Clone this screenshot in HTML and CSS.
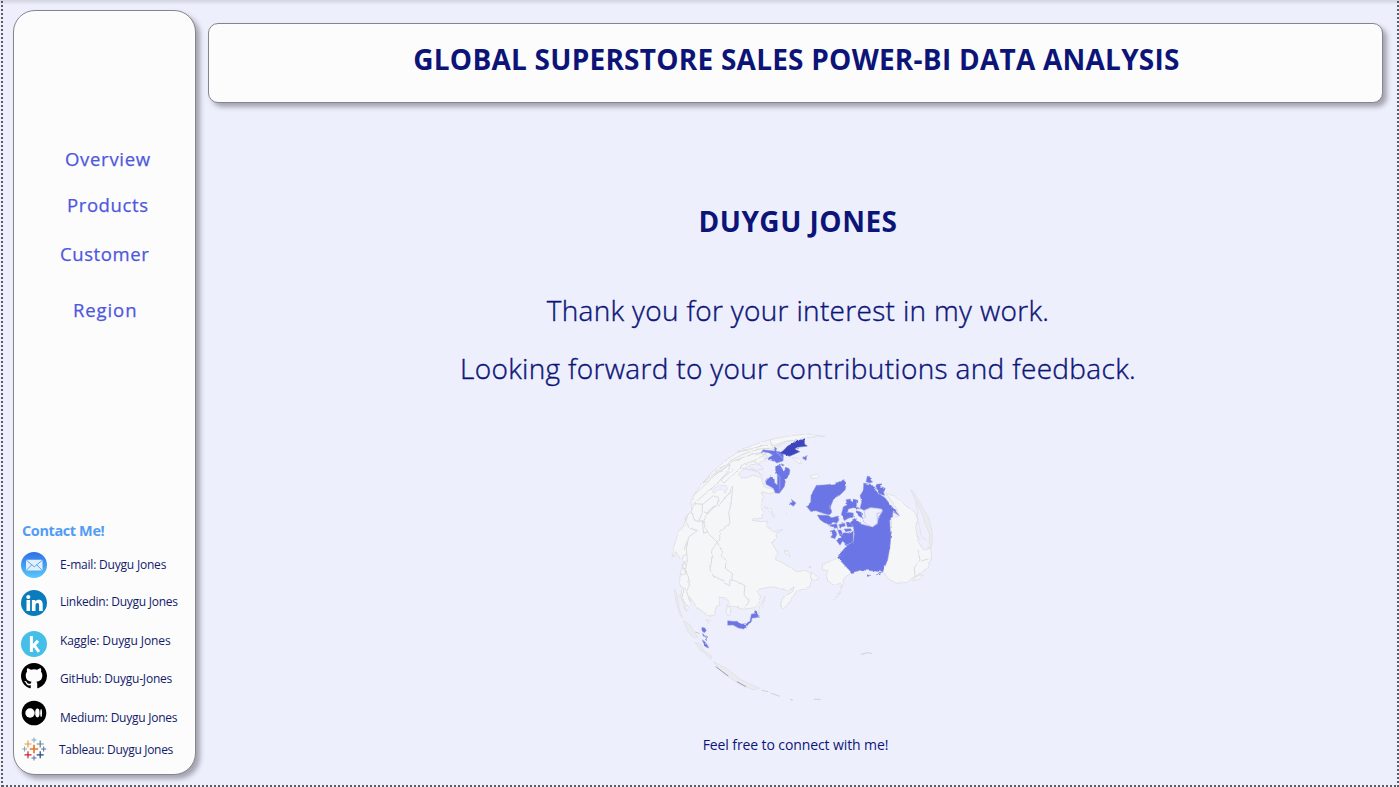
FILE: index.html
```html
<!DOCTYPE html>
<html lang="en">
<head>
<meta charset="utf-8">
<title>Global Superstore Sales</title>
<link rel="stylesheet" href="styles.css">
</head>
<body>
<div class="page">
  <aside class="sidebar">
    <nav class="nav">
      <a class="nav-link overview">Overview</a>
      <a class="nav-link products">Products</a>
      <a class="nav-link customer">Customer</a>
      <a class="nav-link region">Region</a>
    </nav>
    <h3 class="contact-title"><span>Contact Me!</span></h3>
    <div class="contact email">
      <svg class="icon" viewBox="0 0 26 26"><defs><linearGradient id="mail" x1="0" y1="0" x2="0" y2="1"><stop offset="0" stop-color="#2e6fe8"/><stop offset="1" stop-color="#5ac8fa"/></linearGradient></defs><circle cx="13" cy="13" r="13" fill="url(#mail)"/><rect x="5" y="7.8" width="16.5" height="10.8" rx="1.3" fill="#e2effd"/><path d="M5.3 8.2l8 6.6 8-6.6M5.5 18.2l5.2-5.4M21 18.2l-5.2-5.4" fill="none" stroke="#4b9cf0" stroke-width=".9"/></svg>
      <span class="label">E-mail: Duygu Jones</span>
    </div>
    <div class="contact linkedin">
      <svg class="icon" viewBox="0 0 26 26"><circle cx="13" cy="13" r="13" fill="#0a7cbc"/><circle cx="7.3" cy="7" r="2.1" fill="#fff"/><path d="M5.500 10.100h3.600v10.800H5.500zM10.900 10.100h3.400v1.400c.8-1.100 1.900-1.700 3.200-1.700 3.100 0 4.200 1.900 4.200 4.800v6.300h-3.600v-5.500c0-1.500-.4-2.400-1.600-2.400-1.500 0-2 1.100-2 2.500v5.400h-3.600z" fill="#fff"/></svg>
      <span class="label">Linkedin: Duygu Jones</span>
    </div>
    <div class="contact kaggle">
      <svg class="icon" viewBox="0 0 26 26"><circle cx="13" cy="13" r="13" fill="#45bfe8"/><path d="M10.400 5v16M17 9.900l-5.700 6M13 14.200l5 6.700" fill="none" stroke="#fff" stroke-width="3"/></svg>
      <span class="label">Kaggle: Duygu Jones</span>
    </div>
    <div class="contact github">
      <svg class="icon" viewBox="0 0 16 16"><path d="M8 0C3.580 0 0 3.580 0 8c0 3.540 2.290 6.530 5.470 7.590.4.070.55-.17.55-.38 0-.19-.01-.82-.01-1.490-2.010.37-2.530-.49-2.690-.94-.09-.23-.48-.94-.82-1.130-.28-.15-.68-.52-.01-.53.63-.01 1.080.58 1.230.82.72 1.210 1.870.87 2.330.66.07-.52.28-.87.51-1.070-1.780-.2-3.640-.89-3.640-3.950 0-.87.31-1.590.82-2.150-.08-.2-.36-1.020.08-2.120 0 0 .67-.21 2.200.82a7.600 7.600 0 0 1 4 0c1.530-1.040 2.200-.82 2.200-.82.44 1.100.16 1.920.08 2.120.51.56.82 1.270.82 2.150 0 3.070-1.870 3.750-3.650 3.950.29.25.54.73.54 1.480 0 1.070-.01 1.930-.01 2.200 0 .21.15.46.55.38A8.010 8.010 0 0 0 16 8c0-4.420-3.580-8-8-8z"/></svg>
      <span class="label">GitHub: Duygu-Jones</span>
    </div>
    <div class="contact medium">
      <svg class="icon" viewBox="0 0 26 26"><circle cx="13" cy="13" r="12.300"/><g fill="#fff"><circle cx="9" cy="13" r="4.700"/><ellipse cx="16.400" cy="13" rx="2.200" ry="4.400"/><ellipse cx="20.100" cy="13" rx=".9" ry="4"/></g></svg>
      <span class="label">Medium: Duygu Jones</span>
    </div>
    <div class="contact tableau">
      <svg class="icon" viewBox="0 0 26 26" fill="none" stroke-width="1.200"><path d="M13 8.800v8.400M8.800 13h8.400" stroke="#e8762c" stroke-width="1.700"/><path d="M7 4.500v7M3.500 8h7" stroke="#eb9a45"/><path d="M19.200 4.500v7M15.700 8h7" stroke="#5b8590"/><path d="M7 15.300v7M3.500 18.800h7" stroke="#c72035"/><path d="M19.200 15.300v7M15.700 18.800h7" stroke="#1f457e"/><path d="M13 1.500v5M10.500 4h5M3.600 10.500v5M1.100 13h5" stroke="#7ea7b2" stroke-width="1"/><path d="M13 19.500v5M10.500 22h5M22.700 10.500v5M20.200 13h5" stroke="#6469a0" stroke-width="1"/></svg>
      <span class="label">Tableau: Duygu Jones</span>
    </div>
  </aside>
  <main class="main">
    <header class="banner"><h1 class="title"><span>GLOBAL SUPERSTORE SALES POWER-BI DATA ANALYSIS</span></h1></header>
    <h2 class="name"><span>DUYGU JONES</span></h2>
    <p class="message thanks"><span>Thank you for your interest in my work.</span></p>
    <p class="message looking"><span>Looking forward to your contributions and feedback.</span></p>
    <svg class="globe" viewBox="0 0 840 840" stroke-linejoin="round">
      <defs><filter id="coast" filterUnits="userSpaceOnUse" x="0" y="0" width="840" height="840" color-interpolation-filters="sRGB"><feTurbulence type="fractalNoise" baseFrequency=".06" numOctaves="2" seed="4"/><feDisplacementMap in="SourceGraphic" scale="8" xChannelSelector="R" yChannelSelector="G"/></filter></defs>
      <g filter="url(#coast)">
      <!-- land -->
      <g fill="#f4f6f8" stroke="#dfe1e4" stroke-width="3">
        <path d="M495 34L440 27L385 33L330 44L280 60L235 80L195 108L160 138L130 170L106 202L92 230L96 255L80 275L72 300L52 330L40 370L36 400L48 380L62 402L75 412L62 440L58 475L66 490L62 515L80 560L92 535L90 515L108 545L130 562L150 574L164 570L168 545L180 540L175 517L195 518L210 532L200 542L212 550L210 571L198 565L202 542L225 545L250 553L285 548L298 530L302 512L292 500L298 492L340 485L362 492L385 498L402 485L398 500L370 515L360 543L370 553L390 530L410 498L448 487L455 465L452 446L437 436L410 440L392 428L365 412L346 403L354 385L334 352L350 342L348 325L369 314L340 320L320 300L322 288L304 290L276 286L280 280L306 280L309 262L302 242L310 214L304 200L328 206L348 202L340 192L318 188L306 170L306 158L278 150L262 158L240 158L236 148L250 132L272 120L295 116L318 106L310 90L335 70L385 50L430 38L495 34Z"/>
        <path d="M533 398L508 410L488 417L486 434L505 438L499 448L503 470L520 480L545 475L543 495L521 524L536 512L548 482L552 460L575 442Z"/>
        <path d="M678 205L700 212L735 240L765 262L774 283L767 305L775 350L790 375L812 365L815 400L802 430L775 450L760 456L742 472L710 475L685 462L668 437L685 390L693 320L692 280L718 273L705 242Z"/>
        <path d="M454 442l22 15-10 10-14-7zM452 151l18-4 10 7-6 7-22-2zM372 376l12 4 7 12-14-4zM314 243l20 10 10 24-5-2-8-17-17-9zM298 548l10-20 7-15-8 35-12 20zM138 587l14 0-7 8zM397 98l18 2 10 17-12-3zM760 461l18-10 14-1-10 11-24 7z"/>
      </g>
      <!-- country borders -->
      <path d="M100 212L128 186L165 150L210 118L205 138L170 177L120 220L97 240M120 180L160 148L195 130M165 140L220 108L275 88L320 80L310 92L280 108L250 118L225 145L192 174L182 165L220 133M204 112L240 91L295 72L330 70M330 45L335 64L380 48L420 46M230 82L260 76L325 57M95 252L108 236L128 238L126 265L115 290L101 282L95 252M126 240L160 212L176 220L172 235L145 265L132 260M115 290L127 287L136 302L144 325L131 325L127 286M85 265L77 290L90 310L112 317M130 290L148 255L180 237L203 210L218 183L213 240L206 260L210 295L194 307L178 320L180 342L172 352L160 340L144 325M172 352L155 375L155 405L150 435L162 453L190 468L208 483L211 463L238 472L255 482L252 510L268 528L254 548M172 352L188 382L186 395L198 405L196 430L218 446L215 466M112 317L86 336L79 370L82 406L76 435L85 455L88 480L80 500L92 535M76 408L65 420L78 445L62 450M64 485L73 491L65 520L80 542L73 555M774 375L780 405L763 427L765 455M784 408L808 401M280 108L298 118L310 132L290 136L270 128M248 130L285 138L308 152M295 85L318 89L324 101L308 101M65 402L80 385M72 375L82 348" fill="none" stroke="#dadce0" stroke-width="3"/>
      <path d="M158 192L180 181L198 181L203 190L195 205L188 193L175 194L163 204Z" fill="#eeeffd" stroke="#dcdee1" stroke-width="2"/>
      <!-- highlighted countries -->
      <g fill="#6b75e5" stroke="#9da2d8" stroke-width="1.500">
        <path d="M439 244L452 232L453 211L469 181L490 180L525 176L550 164L559 174L556 194L540 210L522 220L511 246L516 262L505 269L485 264L468 257L453 260Z"/>
        <path d="M472 270L500 271L516 278L533 273L537 285L530 295L519 291L512 299L493 293L480 284ZM508 300l22-4 3 12-10 2zM536 299l18-5 2 9-16 4zM558 292l20-3 2 16-18 1zM510 318l14-4 7 13-6 14-13-4 6-9zM533 311l12 4 4 16-13-6zM552 312l20-1 3 6-18 3zM529 346l15-8-3-11 15-4 14 2 10-7-1 34-20 8-11-12-8 13z"/>
        <path d="M544 268L550 245L561 240L558 224L571 222L574 235L580 222L594 226L592 246L600 252L580 248L565 252L563 262L580 264L580 276L565 280L553 287ZM590 257l14 5 3 17-12-7z"/>
        <path d="M572 288L584 280L605 298L635 305L652 298L656 276L666 262L652 250L630 248L612 256L600 250L605 230L600 212L610 196L611 174L632 178L655 205L675 218L692 240L702 252L718 272L699 260L698 272L692 280L694 320L690 365L683 405L668 441L640 438L605 435L575 443L533 398L545 380L562 360L580 350L583 325L580 305Z"/>
        <path d="M622 153l8 2 2 10 6 6-9 3-11-4zM650 178l14-2-4 8 16 6-5 9 3 12-13-3-8-14-8-4zM623 448l10 4-10 3zM649 449l18-7-8 8z"/>
        <path d="M317 166L332 152L343 162L344 173L352 180L352 150L346 135L347 122L360 120L371 138L379 123L390 135L388 148L378 160L373 185L358 205L346 204L340 190L318 178Z"/>
        <path d="M324 100L338 90L328 84L310 80L303 84L309 74L345 78L342 66L350 70L348 78L371 85L369 108L350 114L341 106ZM363 116l9 3-4 6z"/>
        <path d="M387 235l10-3-3-9 14 11-8 10zM427 98l14-6-3 11-7 0zM203 587l15 2 14 0 8 8 20-1 11-13 3-16 9-1 2-10 6 6 1 8 7 3-10 5-12 1-4 10-10 12-8 12-20-4-16-9-16 1z"/>
        <path d="M126 607l9 2 4 8-6 6-8-6zM128 625l8 10-7-2zM138 631l2 15-4-2zM126 644l9 6 7 10 5 9-10-3-5-9zM107 620l10 5"/>
      </g>
      <path d="M352 150L360 158L359 195M349 83L370 100" stroke="#aeb2dc" stroke-width="2" fill="none"/>
      <path d="M612 257L632 248L650 250L668 253L664 263L651 265L652 294L638 306L622 300L607 283L616 276Z" fill="#eeeffd" stroke="#b2b7e3" stroke-width="2"/>
      <path d="M360 84L372 75L382 64L398 55L410 45L433 44L434 58L442 63L412 67L404 72L419 80L402 88L388 94L374 88Z" fill="#3d45bd" stroke="#5f66c8" stroke-width="1.500"/>
      </g>
      <!-- limb of the globe -->
      <g fill="#e9ebee" stroke="#dcdee2" stroke-width="2"><path d="M43 493l9 18 6 40 10 28-8-9-12-39zM70 587l20 12 14 26 10 12-12 3-19-21zM105 652l17 5 12 26-15-9zM133 679l22 13-2 11-15-13zM160 710l40 20 44 35 55 25-17 5-39-15-51-33z"/><path d="M305 796l20 4M332 804l27 10M390 824h9M462 823h20M602 688l10-2M610 686l15-3 10 3M380 265v2M446 426h8" stroke="#cfd1d5" stroke-width="3" fill="none"/><path d="M752 195l8 4 12 22 16 26 18 32 10 38 1 40-5 12-5-20 2-22-12-26-8-30-12-24-10-18-6-16z"/><path d="M767 232l6 28-2 18 8 28 3 22 8 12 12 6" fill="none"/></g>
      <path d="M167 725l38 28M231 770l27 15" stroke="#9da0ba" stroke-width="3" fill="none"/>
    </svg>
    <p class="footer-note"><span>Feel free to connect with me!</span></p>
  </main>
</div>
</body>
</html>
```
FILE: styles.css
```css
* { box-sizing: border-box; }
body { margin: 0; font-family: "Open Sans", "Noto Sans", sans-serif; }
h1, h2, h3, p { margin: 0; }
.page {
  width: 1399px;
  height: 787px;
  overflow: hidden;
  display: flex;
  gap: 12px;
  padding: 10px 16px 12px 13px;
  background:
    repeating-linear-gradient(to bottom, transparent 0 1px, #5b5b61 1px 3px, transparent 3px 4px) 1px 0 / 2px 100% no-repeat,
    repeating-linear-gradient(to bottom, transparent 0 1px, #5b5b61 1px 3px, transparent 3px 4px) 1397px 0 / 2px 100% no-repeat,
    repeating-linear-gradient(to right, transparent 0 2px, #5b5b61 2px 4px) 0 785px / 100% 2px no-repeat,
    linear-gradient(#d3d4df, #eeeffd) 0 0 / 100% 5px no-repeat,
    #eeeffd;
}
.sidebar {
  width: 183px;
  height: 765px;
  border: 1px solid #85858e;
  border-radius: 22px;
  background: #fcfcfc;
  box-shadow: 4px 4px 5px rgba(70, 70, 80, .45);
  padding-top: 134px;
}
.nav { display: flex; flex-direction: column; height: 372px; }
.nav-link { height: 28px; line-height: 28px; font-size: 18.500px; font-weight: 500; color: #4e58dc; -webkit-text-stroke: .25px #4e58dc; white-space: nowrap; letter-spacing: .6px; }
.overview { margin-left: 51px; letter-spacing: .7px; }
.products { margin: 18px 0 0 53px; }
.customer { margin: 21px 0 0 46px; }
.region { margin: 28px 0 0 59px; letter-spacing: .9px; }
.contact-title { height: 28px; line-height: 28px; padding-left: 8px; color: #539cf4; font-size: 14.500px; font-weight: 700; letter-spacing: -.4px; }
.contact { display: flex; height: 26px; gap: 13px; padding-left: 7px; }
.label { line-height: 26px; font-size: 12px; color: #111a6b; white-space: nowrap; letter-spacing: -.2px; }
.icon { width: 26px; height: 26px; flex: none; }
.email { margin-top: 7px; }
.linkedin { margin-top: 11px; }
.linkedin .icon { margin-top: 1px; }
.linkedin .label { letter-spacing: -.25px; }
.kaggle { margin-top: 13px; }
.kaggle .icon { margin-top: 3px; }
.kaggle .label { letter-spacing: -.1px; }
.github { margin-top: 12px; }
.github .icon { margin-top: -3px; }
.medium { margin-top: 13px; }
.medium .icon { margin-top: -5px; }
.medium .label { letter-spacing: -.25px; }
.tableau { margin-top: 6px; gap: 12px; }
.tableau .icon { margin-top: -1px; }
.tableau .label { letter-spacing: -.3px; }
.main { width: 1175px; padding-top: 13px; display: flex; flex-direction: column; align-items: center; color: #0c1577; white-space: nowrap; }
.banner { width: 1175px; height: 80px; flex: none; border: 1px solid #85858e; border-radius: 10px; background: #fcfcfc; box-shadow: 4px 4px 5px rgba(70, 70, 80, .45); text-align: center; }
.title, .name { font-size: 28px; font-weight: 700; height: 40px; line-height: 40px; letter-spacing: .24px; }
.title { margin-top: 15px; padding-left: 2px; }
.name { margin-top: 98px; padding-left: 5px; letter-spacing: .5px; }
.message { font-size: 28px; font-weight: 300; height: 40px; line-height: 40px; padding-left: 5px; letter-spacing: .33px; -webkit-text-stroke: .4px #0c1577; }
.thanks { margin-top: 49px; }
.looking { margin-top: 18px; }
.globe { width: 280px; height: 280px; flex: none; margin: 37px 0 0 9px; }
.footer-note { margin-top: 30px; height: 20px; line-height: 20px; font-size: 14px; letter-spacing: -.1px; }
```
